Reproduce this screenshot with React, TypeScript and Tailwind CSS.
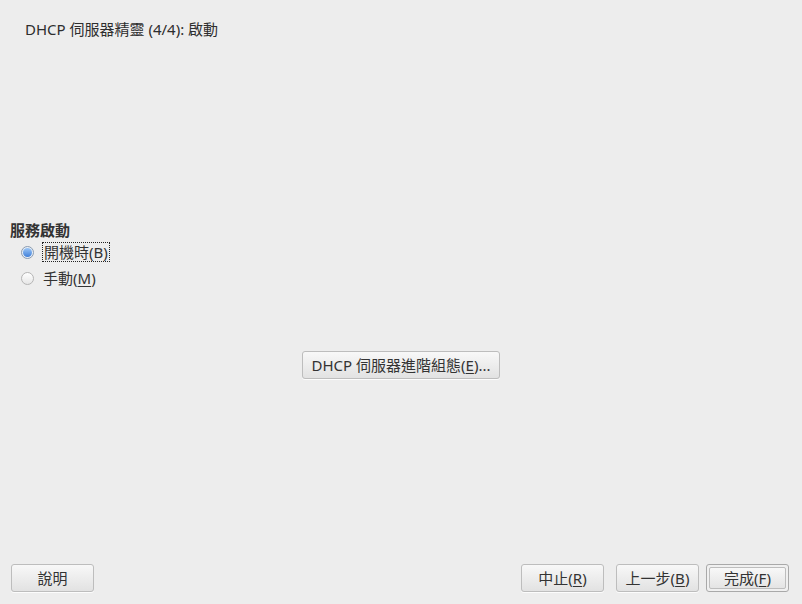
import React from "react";

const font = { fontFamily: '"Noto Sans", "Noto Sans CJK TC", sans-serif' };

function Btn({ children, w = "w-[83px]", def = false }: { children: React.ReactNode; w?: string; def?: boolean }) {
  if (def) {
    return (
      <div className={`${w} h-[28px] rounded-[3px] border border-[#a9a9a9] bg-[#f0f0f0] p-[2px]`}>
        <div className="w-full h-full rounded-[2px] border border-[#bdbdbd] bg-gradient-to-b from-[#f8f8f8] to-[#e4e4e4] flex items-center justify-center text-[15px] text-[#333]">
          {children}
        </div>
      </div>
    );
  }
  return (
    <div className={`${w} h-[28px] rounded-[3px] border border-[#bdbdbd] bg-gradient-to-b from-[#f8f8f8] to-[#e2e2e2] flex items-center justify-center text-[15px] text-[#333] shadow-[0_1px_0_rgba(255,255,255,0.8)]`}>
      {children}
    </div>
  );
}

function Radio({ checked }: { checked: boolean }) {
  return checked ? (
    <div className="w-[13px] h-[13px] rounded-full border border-[#8a9bb0] bg-[#e8eef6] flex items-center justify-center">
      <div className="w-[9px] h-[9px] rounded-full bg-gradient-to-b from-[#9cc6f5] to-[#3f7fd9]" />
    </div>
  ) : (
    <div className="w-[13px] h-[13px] rounded-full border border-[#b5b5b5] bg-gradient-to-b from-[#ffffff] to-[#e6e6e6]" />
  );
}

export default function App() {
  return (
    <div style={font} className="w-[802px] h-[604px] bg-[#ededed] flex flex-col text-[#333] overflow-hidden">
      <div className="pl-[25px] pt-[19px] h-[40px] text-[15px] leading-[20px] text-[#2e2e2e]">
        DHCP 伺服器精靈 (4/4): 啟動
      </div>
      <div className="mt-[180px] pl-[10px]">
        <div className="text-[15px] font-bold leading-[20px] text-[#333]">服務啟動</div>
        <div className="flex flex-col pl-[11px] mt-[2px] gap-[6px]">
          <div className="flex items-center gap-[8px] h-[20px]">
            <Radio checked />
            <span className="border border-dotted border-[#222] px-[1px] text-[15px] leading-[18px]">開機時(B)</span>
          </div>
          <div className="flex items-center gap-[9px] h-[20px]">
            <Radio checked={false} />
            <span className="text-[15px] leading-[18px]">
              手動(<span className="underline underline-offset-2">M</span>)
            </span>
          </div>
        </div>
      </div>
      <div className="flex justify-center mt-[63px]">
        <Btn w="w-[198px]">
          DHCP 伺服器進階組態(<span className="underline underline-offset-2">E</span>)...
        </Btn>
      </div>
      <div className="flex-1" />
      <div className="flex items-center px-[11px] pb-[12px]">
        <Btn>說明</Btn>
        <div className="flex-1" />
        <Btn>中止(<span className="underline underline-offset-2">R</span>)</Btn>
        <div className="w-[12px]" />
        <Btn>上一步(<span className="underline underline-offset-2">B</span>)</Btn>
        <div className="w-[7px]" />
        <Btn def>完成(<span className="underline underline-offset-2">F</span>)</Btn>
        <div className="w-[2px]" />
      </div>
    </div>
  );
}
